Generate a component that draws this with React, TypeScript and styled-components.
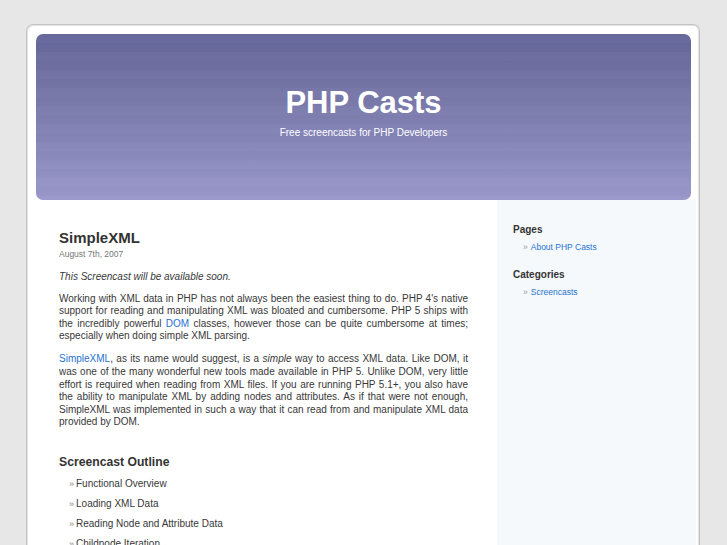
import React from "react";
import styled, { createGlobalStyle } from "styled-components";

const GlobalStyle = createGlobalStyle`
    html, body {
        margin: 0;
        padding: 0;
        background: #e7e7e7;
        font-family: "Liberation Sans", Arial, sans-serif;
        color: #383838;
    }
`;

const Page = styled.div`
    box-sizing: border-box;
    width: 674px;
    min-height: 540px;
    margin: 24px 0 0 26px;
    padding: 9px 3px 0 9px;
    background: #fff;
    border: 1px solid #c4c4c4;
    border-bottom: none;
    border-radius: 7px 7px 0 0;
    box-shadow: inset 1px 1px 0 #e2e2e2, inset -1px 0 0 #e2e2e2;
    display: flex;
    flex-direction: column;
`;

const Header = styled.header`
    width: 655px;
    height: 166px;
    border-radius: 7px;
    background:
        repeating-linear-gradient(180deg, rgba(255, 255, 255, 0.012) 0 9px, rgba(0, 0, 0, 0.012) 9px 18px),
        linear-gradient(180deg, #65669a 0%, #7676a8 35%, #8a89bc 70%, #9b99cc 100%);
    color: #fff;
    display: flex;
    flex-direction: column;
    align-items: center;
    padding-top: 51px;
    box-sizing: border-box;
`;

const SiteTitle = styled.h1`
    margin: 0;
    font-size: 31px;
    line-height: 36px;
    font-weight: bold;
`;

const Tagline = styled.div`
    margin-top: 6px;
    font-size: 10px;
    line-height: 12px;
`;

const Main = styled.div`
    display: flex;
    flex: 1;
    align-items: stretch;
`;

const Content = styled.main`
    width: 409px;
    padding: 29px 29px 0 23px;
`;

const Sidebar = styled.aside`
    width: 183px;
    padding: 24px 0 0 16px;
    background: #f6f9fc;
`;

const PostTitle = styled.h2`
    margin: 0;
    font-size: 15px;
    line-height: 17px;
    font-weight: bold;
    color: #333;
`;

const PostDate = styled.div`
    margin-top: 3px;
    font-size: 8.5px;
    line-height: 11px;
    color: #777;
`;

const Para = styled.p<{ $italic?: boolean }>`
    margin: 0 0 10.5px;
    font-size: 10px;
    line-height: 12.6px;
    text-align: justify;
    font-style: ${(p) => (p.$italic ? "italic" : "normal")};
    &:first-of-type {
        margin-top: 10.5px;
        margin-bottom: 9.5px;
    }
`;

const Link = styled.a`
    color: #1f72d0;
    text-decoration: none;
`;

const SectionTitle = styled.h3`
    margin: 26px 0 9px;
    font-size: 12.2px;
    line-height: 14px;
    font-weight: bold;
    color: #333;
`;

const Outline = styled.ul`
    list-style: none;
    margin: 0;
    padding: 0 0 0 10px;
`;

const OutlineItem = styled.li`
    font-size: 10px;
    line-height: 12.6px;
    margin-bottom: 7.4px;
    &::before {
        content: "»";
        color: #888;
        margin-right: 2px;
        font-size: 9px;
    }
`;

const WidgetTitle = styled.h2`
    margin: 0;
    font-size: 10px;
    line-height: 12px;
    font-weight: bold;
    color: #333;
`;

const WidgetList = styled.ul`
    list-style: none;
    margin: 6px 0 16px;
    padding: 0 0 0 10px;
`;

const WidgetItem = styled.li`
    font-size: 8.5px;
    line-height: 11px;
    &::before {
        content: "»";
        color: #999;
        margin-right: 3px;
    }
`;

const outline = [
    "Functional Overview",
    "Loading XML Data",
    "Reading Node and Attribute Data",
    "Childnode Iteration",
];

export default function App() {
    return (
        <>
            <GlobalStyle />
            <Page>
                <Header>
                    <SiteTitle>PHP Casts</SiteTitle>
                    <Tagline>Free screencasts for PHP Developers</Tagline>
                </Header>
                <Main>
                    <Content>
                        <PostTitle>SimpleXML</PostTitle>
                        <PostDate>August 7th, 2007</PostDate>
                        <Para $italic>This Screencast will be available soon.</Para>
                        <Para>
                            Working with XML data in PHP has not always been the easiest thing to do. PHP 4's native
                            support for reading and manipulating XML was bloated and cumbersome. PHP 5 ships with
                            the incredibly powerful <Link href="#">DOM</Link> classes, however those can be quite
                            cumbersome at times; especially when doing simple XML parsing.
                        </Para>
                        <Para>
                            <Link href="#">SimpleXML</Link>, as its name would suggest, is a <em>simple</em> way to
                            access XML data. Like DOM, it was one of the many wonderful new tools made available in
                            PHP 5. Unlike DOM, very little effort is required when reading from XML files. If you are
                            running PHP 5.1+, you also have the ability to manipulate XML by adding nodes and
                            attributes. As if that were not enough, SimpleXML was implemented in such a way that it
                            can read from and manipulate XML data provided by DOM.
                        </Para>
                        <SectionTitle>Screencast Outline</SectionTitle>
                        <Outline>
                            {outline.map((item) => (
                                <OutlineItem key={item}>{item}</OutlineItem>
                            ))}
                        </Outline>
                    </Content>
                    <Sidebar>
                        <WidgetTitle>Pages</WidgetTitle>
                        <WidgetList>
                            <WidgetItem>
                                <Link href="#">About PHP Casts</Link>
                            </WidgetItem>
                        </WidgetList>
                        <WidgetTitle>Categories</WidgetTitle>
                        <WidgetList>
                            <WidgetItem>
                                <Link href="#">Screencasts</Link>
                            </WidgetItem>
                        </WidgetList>
                    </Sidebar>
                </Main>
            </Page>
        </>
    );
}
